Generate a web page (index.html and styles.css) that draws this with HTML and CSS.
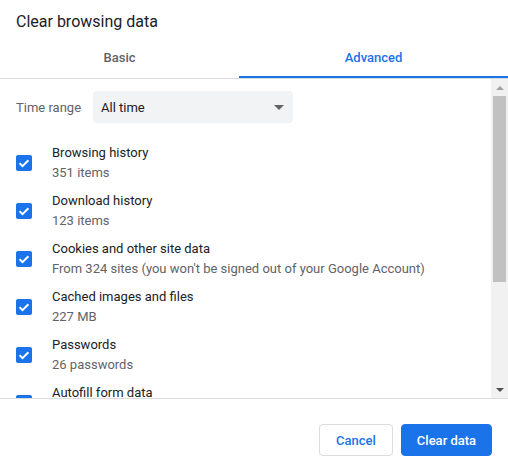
FILE: index.html
```html
<!DOCTYPE html>
<html lang="en">

<head>
    <meta charset="UTF-8">
    <title>Clear browsing data</title>
    <link rel="stylesheet" href="styles.css">
</head>

<body>
    <div class="dialog">
        <div class="title">Clear browsing data</div>

        <div class="tabs">
            <div class="tab basic">Basic</div>
            <div class="tab active">Advanced</div>
        </div>

        <div class="content">
            <div class="list">
                <div class="range">
                    <span class="range-label">Time range</span>
                    <div class="select">
                        <span>All time</span>
                        <span class="caret"></span>
                    </div>
                </div>

                <div class="row">
                    <span class="check"><svg width="16" height="16" viewBox="0 0 16 16"><path d="M3.6 8.2l2.9 2.9 5.9-5.9" fill="none" stroke="#fff" stroke-width="2"/></svg></span>
                    <div class="label">
                        <div class="main">Browsing history</div>
                        <div class="sub">351 items</div>
                    </div>
                </div>

                <div class="row">
                    <span class="check"><svg width="16" height="16" viewBox="0 0 16 16"><path d="M3.6 8.2l2.9 2.9 5.9-5.9" fill="none" stroke="#fff" stroke-width="2"/></svg></span>
                    <div class="label">
                        <div class="main">Download history</div>
                        <div class="sub">123 items</div>
                    </div>
                </div>

                <div class="row">
                    <span class="check"><svg width="16" height="16" viewBox="0 0 16 16"><path d="M3.6 8.2l2.9 2.9 5.9-5.9" fill="none" stroke="#fff" stroke-width="2"/></svg></span>
                    <div class="label">
                        <div class="main">Cookies and other site data</div>
                        <div class="sub">From 324 sites (you won't be signed out of your Google Account)</div>
                    </div>
                </div>

                <div class="row">
                    <span class="check"><svg width="16" height="16" viewBox="0 0 16 16"><path d="M3.6 8.2l2.9 2.9 5.9-5.9" fill="none" stroke="#fff" stroke-width="2"/></svg></span>
                    <div class="label">
                        <div class="main">Cached images and files</div>
                        <div class="sub">227 MB</div>
                    </div>
                </div>

                <div class="row">
                    <span class="check"><svg width="16" height="16" viewBox="0 0 16 16"><path d="M3.6 8.2l2.9 2.9 5.9-5.9" fill="none" stroke="#fff" stroke-width="2"/></svg></span>
                    <div class="label">
                        <div class="main">Passwords</div>
                        <div class="sub">26 passwords</div>
                    </div>
                </div>

                <div class="row">
                    <span class="check"><svg width="16" height="16" viewBox="0 0 16 16"><path d="M3.6 8.2l2.9 2.9 5.9-5.9" fill="none" stroke="#fff" stroke-width="2"/></svg></span>
                    <div class="label">
                        <div class="main">Autofill form data</div>
                    </div>
                </div>
            </div>

            <div class="scrollbar">
                <div class="sb-btn"><span class="arrow-up"></span></div>
                <div class="sb-thumb"></div>
                <div class="sb-track"></div>
                <div class="sb-btn"><span class="arrow-down"></span></div>
            </div>
        </div>

        <div class="footer">
            <button class="btn cancel">Cancel</button>
            <button class="btn primary">Clear data</button>
        </div>
    </div>
</body>

</html>
```

FILE: styles.css
```css
body {
    margin: 0;
    background-color: #fff;
    font-family: Roboto, "Liberation Sans", sans-serif;
    color: #202124;
}

.dialog {
    width: 508px;
    height: 465px;
    overflow: hidden;
}

.title {
    font-size: 16px;
    line-height: 20px;
    padding: 12px 16px 0 16px;
    color: #202124;
}

.tabs {
    display: flex;
    margin-top: 8px;
    border-bottom: 1px solid #dadce0;
}

.tab {
    font-size: 13px;
    font-weight: 500;
    line-height: 20px;
    padding: 8px 0 8px 0;
    text-align: center;
    color: #5f6368;
    border-bottom: 2px solid transparent;
}

.basic {
    width: 239px;
}

.active {
    flex: 1;
    color: #1a73e8;
    border-bottom-color: #1a73e8;
}

.content {
    display: flex;
    height: 319px;
    border-bottom: 1px solid #dadce0;
}

.list {
    flex: 1;
    overflow: hidden;
    padding-top: 12px;
}

.range {
    display: flex;
    align-items: center;
    padding-left: 16px;
    margin-bottom: 16px;
}

.range-label {
    font-size: 13px;
    color: #5f6368;
    width: 77px;
}

.select {
    display: flex;
    align-items: center;
    justify-content: space-between;
    width: 200px;
    height: 32px;
    box-sizing: border-box;
    padding: 0 9px 0 8px;
    background-color: #f1f3f4;
    border-radius: 4px;
    font-size: 13px;
    color: #202124;
}

.caret {
    width: 0;
    height: 0;
    border-left: 5px solid transparent;
    border-right: 5px solid transparent;
    border-top: 5px solid #5f6368;
}

.row {
    display: flex;
    align-items: flex-start;
    height: 48px;
    box-sizing: border-box;
    padding: 4px 0 0 16px;
}

.check {
    width: 16px;
    height: 16px;
    border-radius: 2px;
    background-color: #1a73e8;
    margin: 12px 20px 0 0;
    flex-shrink: 0;
}

.check svg {
    display: block;
}

.label {
    font-size: 13px;
    line-height: 20px;
}

.main {
    color: #202124;
}

.sub {
    color: #5f6368;
}

.scrollbar {
    width: 17px;
    display: flex;
    flex-direction: column;
    background-color: #f1f1f1;
}

.sb-btn {
    height: 17px;
    display: flex;
    align-items: center;
    justify-content: center;
    flex-shrink: 0;
}

.arrow-up {
    width: 0;
    height: 0;
    border-left: 4px solid transparent;
    border-right: 4px solid transparent;
    border-bottom: 4px solid #a3a3a3;
}

.arrow-down {
    width: 0;
    height: 0;
    border-left: 4px solid transparent;
    border-right: 4px solid transparent;
    border-top: 4px solid #505050;
}

.sb-thumb {
    height: 186px;
    margin: 0 2px;
    background-color: #c1c1c1;
    flex-shrink: 0;
}

.sb-track {
    flex: 1;
}

.footer {
    display: flex;
    justify-content: flex-end;
    gap: 8px;
    padding: 25px 16px 0 0;
}

.btn {
    height: 32px;
    border-radius: 4px;
    font-family: Roboto, "Liberation Sans", sans-serif;
    font-size: 13px;
    font-weight: 500;
    padding: 0;
    white-space: nowrap;
    cursor: pointer;
}

.cancel {
    width: 74px;
    background-color: #fff;
    color: #1a73e8;
    border: 1px solid #dadce0;
}

.primary {
    width: 91px;
    background-color: #1a73e8;
    color: #fff;
    border: 1px solid #1a73e8;
}
```
